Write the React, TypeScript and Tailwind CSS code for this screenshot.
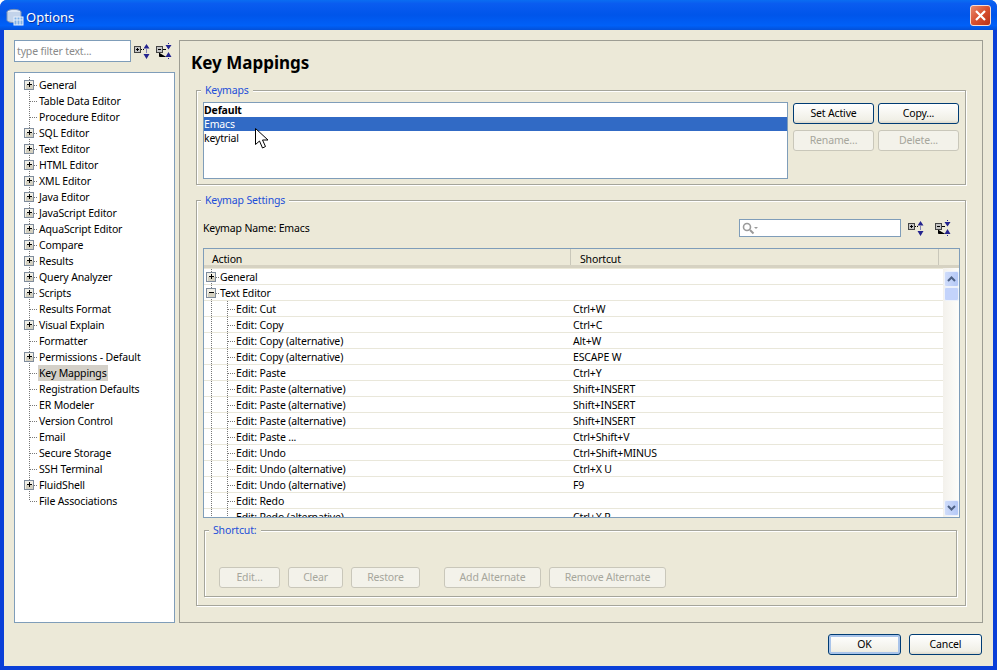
import React from 'react';

const sideItems: { label: string; expandable?: boolean; selected?: boolean }[] = [
  { label: 'General', expandable: true },
  { label: 'Table Data Editor' },
  { label: 'Procedure Editor' },
  { label: 'SQL Editor', expandable: true },
  { label: 'Text Editor', expandable: true },
  { label: 'HTML Editor', expandable: true },
  { label: 'XML Editor', expandable: true },
  { label: 'Java Editor', expandable: true },
  { label: 'JavaScript Editor', expandable: true },
  { label: 'AquaScript Editor', expandable: true },
  { label: 'Compare', expandable: true },
  { label: 'Results', expandable: true },
  { label: 'Query Analyzer', expandable: true },
  { label: 'Scripts', expandable: true },
  { label: 'Results Format' },
  { label: 'Visual Explain', expandable: true },
  { label: 'Formatter' },
  { label: 'Permissions - Default', expandable: true },
  { label: 'Key Mappings', selected: true },
  { label: 'Registration Defaults' },
  { label: 'ER Modeler' },
  { label: 'Version Control' },
  { label: 'Email' },
  { label: 'Secure Storage' },
  { label: 'SSH Terminal' },
  { label: 'FluidShell', expandable: true },
  { label: 'File Associations' },
];

const actionRows: [string, string][] = [
  ['Edit: Cut', 'Ctrl+W'],
  ['Edit: Copy', 'Ctrl+C'],
  ['Edit: Copy (alternative)', 'Alt+W'],
  ['Edit: Copy (alternative)', 'ESCAPE W'],
  ['Edit: Paste', 'Ctrl+Y'],
  ['Edit: Paste (alternative)', 'Shift+INSERT'],
  ['Edit: Paste (alternative)', 'Shift+INSERT'],
  ['Edit: Paste (alternative)', 'Shift+INSERT'],
  ['Edit: Paste ...', 'Ctrl+Shift+V'],
  ['Edit: Undo', 'Ctrl+Shift+MINUS'],
  ['Edit: Undo (alternative)', 'Ctrl+X U'],
  ['Edit: Undo (alternative)', 'F9'],
  ['Edit: Redo', ''],
  ['Edit: Redo (alternative)', 'Ctrl+X R'],
];

const ToggleBox = ({ x, open }: { x: number; open?: boolean }) => (
  <g>
    <rect x={x - 4.5} y={3.5} width={9} height={9} fill="#f1efe6" stroke="#7f8c9c" />
    <rect x={x - 3} y={8} width={7} height={4} fill="#d4d0c0" />
    <path d={`M${x - 2} 7.5h5`} stroke="#000" />
    {!open && <path d={`M${x + 0.5} 5v5`} stroke="#000" />}
  </g>
);

const SideGuide = ({ expandable, last }: { expandable?: boolean; last?: boolean }) => (
  <svg width="23" height="16" className="shrink-0">
    <path d={last ? 'M14.5 0v8' : 'M14.5 0v16'} stroke="#777" strokeDasharray="1 1" />
    <path d="M15 8.5h8" stroke="#777" strokeDasharray="1 1" />
    {expandable && <ToggleBox x={14} />}
  </svg>
);

const ExpandAllIcon = () => (
  <svg width="17" height="17" viewBox="0 0 17 17" className="shrink-0">
    <rect x="0.5" y="3.5" width="6" height="6" fill="#c4c4c4" stroke="#444" />
    <path d="M2 6.5h3M3.5 5v3" stroke="#000" />
    <path d="M7 6.5h3" stroke="#000" strokeDasharray="1 1" />
    <path d="M12.5 1l3 4.5h-6zM12.5 16l-3-5h6z" fill="#24248f" />
    <path d="M12.5 6.5v3" stroke="#24248f" strokeDasharray="1 1" />
  </svg>
);

const CollapseAllIcon = () => (
  <svg width="17" height="17" viewBox="0 0 17 17" className="shrink-0">
    <rect x="0.5" y="3.5" width="6" height="6" fill="#c4c4c4" stroke="#444" />
    <path d="M2 6.5h3" stroke="#000" />
    <path d="M3.5 10v3.5h6M7 6.5h3" stroke="#000" />
    <path d="M12.5 6.5l-3-4.5h6zM12.5 9l3 5h-6z" fill="#24248f" />
    <path d="M12 0.5h1M12 15.5h1" stroke="#24248f" />
  </svg>
);

const Button = ({
  label,
  width,
  disabled,
  focused,
}: {
  label: string;
  width: string;
  disabled?: boolean;
  focused?: boolean;
}) => (
  <div
    className={`${width} h-[21px] shrink-0 rounded-[3px] border pb-[2px] flex items-center justify-center ${
      disabled
        ? 'border-[#c9c7ba] bg-[#f3f2ea] text-[#a6a69c]'
        : focused
          ? 'border-[#003c74] bg-[linear-gradient(180deg,#fff,#f0efe6_85%,#dcd8cb)] text-black shadow-[inset_0_0_0_2px_#a9c4ea]'
          : 'border-[#003c74] bg-[linear-gradient(180deg,#fff,#f0efe6_85%,#dcd8cb)] text-black'
    }`}
  >
    {label}
  </div>
);

const Group = ({
  title,
  className,
  children,
}: {
  title: string;
  className: string;
  children: React.ReactNode;
}) => (
  <div
    className={`relative border border-[#a5a59b] shadow-[inset_1px_1px_0_#fff,1px_1px_0_#fff] ${className}`}
  >
    <span className="absolute -top-[9px] left-[4px] bg-[#ece9d8] px-[4px] leading-[16px] text-[#1d4fd8]">
      {title}
    </span>
    {children}
  </div>
);

const ScrollButton = ({ up }: { up?: boolean }) => (
  <div className="h-[16px] w-[15px] rounded-[2px] border border-[#eef2fb] bg-[linear-gradient(90deg,#cfdcfa,#b4c8f6)] flex items-center justify-center">
    <svg width="9" height="6" viewBox="0 0 9 6">
      <path d={up ? 'M1 5l3.5-3.5L8 5' : 'M1 1l3.5 3.5L8 1'} fill="none" stroke="#4d6185" strokeWidth="2" />
    </svg>
  </div>
);

const TableRow = ({
  action,
  shortcut,
  indent,
  toggle,
  open,
}: {
  action: string;
  shortcut: string;
  indent?: boolean;
  toggle?: boolean;
  open?: boolean;
}) => (
  <div className="flex h-[16px] shrink-0 border-b border-[#e9e7da] bg-white">
    <div className="flex w-[367px] shrink-0 items-center overflow-hidden">
      <svg width={indent ? 32 : 16} height="16" className="shrink-0">
        <path d="M7.5 0v16" stroke="#777" strokeDasharray="1 1" />
        {indent ? (
          <>
            <path d="M23.5 0v16" stroke="#777" strokeDasharray="1 1" />
            <path d="M24 8.5h8" stroke="#777" strokeDasharray="1 1" />
          </>
        ) : (
          <path d="M12 8.5h4" stroke="#777" strokeDasharray="1 1" />
        )}
        {toggle && <ToggleBox x={7} open={open} />}
      </svg>
      <span className="whitespace-nowrap">{action}</span>
    </div>
    <div className="whitespace-nowrap pl-[2px] leading-[16px]">{shortcut}</div>
  </div>
);

const App: React.FC = () => {
  return (
    <div className="relative flex h-[670px] w-[997px] flex-col overflow-hidden rounded-t-[7px] bg-[#0a3fd8] font-['Noto_Sans',sans-serif] text-[10.5px] leading-[16px] tracking-[-0.15px] text-black">
      {/* title bar */}
      <div className="flex h-[30px] shrink-0 items-center justify-between bg-[linear-gradient(180deg,#0a6df2_0%,#0a5cf0_12%,#0055ea_50%,#0060f8_85%,#0350d8_100%)] pl-[6px] pr-[6px]">
        <div className="flex items-center gap-[2px] pt-[3px]">
          <svg width="18" height="18" viewBox="0 0 18 18">
            <ellipse cx="8" cy="4" rx="7" ry="2.6" fill="#dfe8f5" stroke="#7b93b8" />
            <path d="M1 4v8c0 1.5 3 2.6 7 2.6s7-1.1 7-2.6V4" fill="#c3d3ea" stroke="#7b93b8" />
            <rect x="8" y="9" width="9" height="8" fill="#7fb0e6" stroke="#e8f0fa" />
            <path d="M8 12h9M11 9v8M14 9v8" stroke="#e8f0fa" />
          </svg>
          <span className="text-[13px] leading-[18px] tracking-normal text-white [text-shadow:1px_1px_0_#0a2f9c]">
            Options
          </span>
        </div>
        <div className="flex h-[21px] w-[21px] items-center justify-center rounded-[3px] border border-[#f6dcd2] bg-[linear-gradient(135deg,#e88a6c,#d8502f_50%,#b83218)]">
          <svg width="13" height="13" viewBox="0 0 13 13">
            <path d="M2 2l9 9M11 2l-9 9" stroke="#fff" strokeWidth="2.2" />
          </svg>
        </div>
      </div>

      {/* window body */}
      <div className="mx-[4px] mb-[4px] flex min-h-0 flex-1 flex-col bg-[#ece9d8] px-[10px] pt-[10px]">
        <div className="flex h-[583px] shrink-0 gap-[4px]">
          {/* left column */}
          <div className="flex w-[161px] shrink-0 flex-col">
            <div className="flex h-[22px] items-center">
              <div className="flex h-[22px] w-[117px] items-center border border-[#7f9db9] bg-white pl-[2px] text-[#8a8a8a]">
                type filter text...
              </div>
              <div className="ml-[3px]">
                <ExpandAllIcon />
              </div>
              <div className="ml-[5px]">
                <CollapseAllIcon />
              </div>
            </div>
            <div className="mt-[10px] flex-1 border border-[#7f9db9] bg-white pt-[4px]">
              {sideItems.map((item, i) => (
                <div key={item.label} className="flex h-[16px]">
                  <SideGuide expandable={item.expandable} last={i === sideItems.length - 1} />
                  <span className={`px-px whitespace-nowrap ${item.selected ? 'bg-[#d4d0c8]' : ''}`}>
                    {item.label}
                  </span>
                </div>
              ))}
            </div>
          </div>

          {/* right panel */}
          <div className="flex min-w-0 flex-1 flex-col border border-[#9d9d93] px-[16px]">
            <h1 className="ml-[-5px] mt-[11px] text-[17px] font-bold leading-[22px] tracking-normal">Key Mappings</h1>

            <Group title="Keymaps" className="mt-[16px] flex h-[95px] shrink-0 gap-[5px] pl-[6px] pr-[6px] pt-[11px]">
              <div className="h-[77px] w-[585px] shrink-0 border border-[#7f9db9] bg-white leading-[14px]">
                <div className="h-[14px] font-bold">Default</div>
                <div className="h-[14px] bg-[#316ac5] text-white">Emacs</div>
                <div className="h-[14px]">keytrial</div>
              </div>
              <div className="flex flex-col gap-[6px] pt-px">
                <div className="flex gap-[4px]">
                  <Button label="Set Active" width="w-[81px]" />
                  <Button label="Copy..." width="w-[81px]" />
                </div>
                <div className="flex gap-[4px]">
                  <Button label="Rename..." width="w-[81px]" disabled />
                  <Button label="Delete..." width="w-[81px]" disabled />
                </div>
              </div>
            </Group>

            <Group title="Keymap Settings" className="mt-[15px] h-[406px] shrink-0 px-[6px] pt-[18px]">
              <div className="flex h-[18px] items-center justify-between pr-[7px]">
                <span>Keymap Name: Emacs</span>
                <div className="flex items-center">
                  <div className="flex h-[18px] w-[162px] items-center border border-[#7f9db9] bg-white pl-[2px]">
                    <svg width="16" height="13" viewBox="0 0 16 13">
                      <circle cx="5" cy="5" r="3.5" fill="none" stroke="#9a9a9a" strokeWidth="1.6" />
                      <path d="M8 8l3.5 3.5" stroke="#9a9a9a" strokeWidth="2" />
                      <path d="M12 5h4l-2 2z" fill="#9a9a9a" />
                    </svg>
                  </div>
                  <div className="ml-[7px]">
                    <ExpandAllIcon />
                  </div>
                  <div className="ml-[10px]">
                    <CollapseAllIcon />
                  </div>
                </div>
              </div>

              <div className="mt-[11px] flex h-[270px] w-[757px] flex-col overflow-hidden border border-[#7f9db9] bg-[#ece9d8]">
                <div className="flex h-[19px] shrink-0 border-b-[3px] border-[#d6d2c2] pr-[20px]">
                  <div className="w-[366px] pl-[8px] pt-[2px]">Action</div>
                  <div className="flex-1 border-l border-[#c9c7ba] pl-[9px] pt-[2px]">Shortcut</div>
                  <div className="border-r border-[#c9c7ba]" />
                </div>
                <div className="flex min-h-0 flex-1">
                  <div className="mt-[1px] flex w-[739px] shrink-0 flex-col overflow-hidden bg-white">
                    <TableRow action="General" shortcut="" toggle />
                    <TableRow action="Text Editor" shortcut="" toggle open />
                    {actionRows.map(([action, shortcut], i) => (
                      <TableRow key={i} action={action} shortcut={shortcut} indent />
                    ))}
                  </div>
                  <div className="flex w-[17px] shrink-0 flex-col bg-[linear-gradient(90deg,#f3f1ec,#fefefb)] pt-[3px] pl-px">
                    <ScrollButton up />
                    <div className="h-[14px] w-[15px] rounded-[2px] border border-[#eef2fb] bg-[#c3d3fb]" />
                    <div className="flex-1" />
                    <div className="pb-px">
                      <ScrollButton />
                    </div>
                  </div>
                </div>
              </div>

              <Group title="Shortcut:" className="ml-px mt-[12px] flex h-[67px] w-[753px] items-start gap-[8px] px-[14px] pt-[36px]">
                <Button label="Edit..." width="w-[61px]" disabled />
                <Button label="Clear" width="w-[55px]" disabled />
                <Button label="Restore" width="w-[69px]" disabled />
                <div className="w-[8px] shrink-0" />
                <Button label="Add Alternate" width="w-[97px]" disabled />
                <Button label="Remove Alternate" width="w-[117px]" disabled />
              </Group>
            </Group>
          </div>
        </div>

        {/* dialog buttons */}
        <div className="mt-[11px] flex justify-end gap-[8px] pr-px">
          <Button label="OK" width="w-[73px]" focused />
          <Button label="Cancel" width="w-[73px]" />
        </div>
      </div>

      {/* mouse pointer */}
      <svg width="14" height="22" viewBox="0 0 14 22" className="absolute left-[255px] top-[128px]">
        <path d="M0.5 0.5v16l4-3.5 3 7 3-1.5-3-6.5h5.5z" fill="#fff" stroke="#000" />
      </svg>
    </div>
  );
};

export default App;
